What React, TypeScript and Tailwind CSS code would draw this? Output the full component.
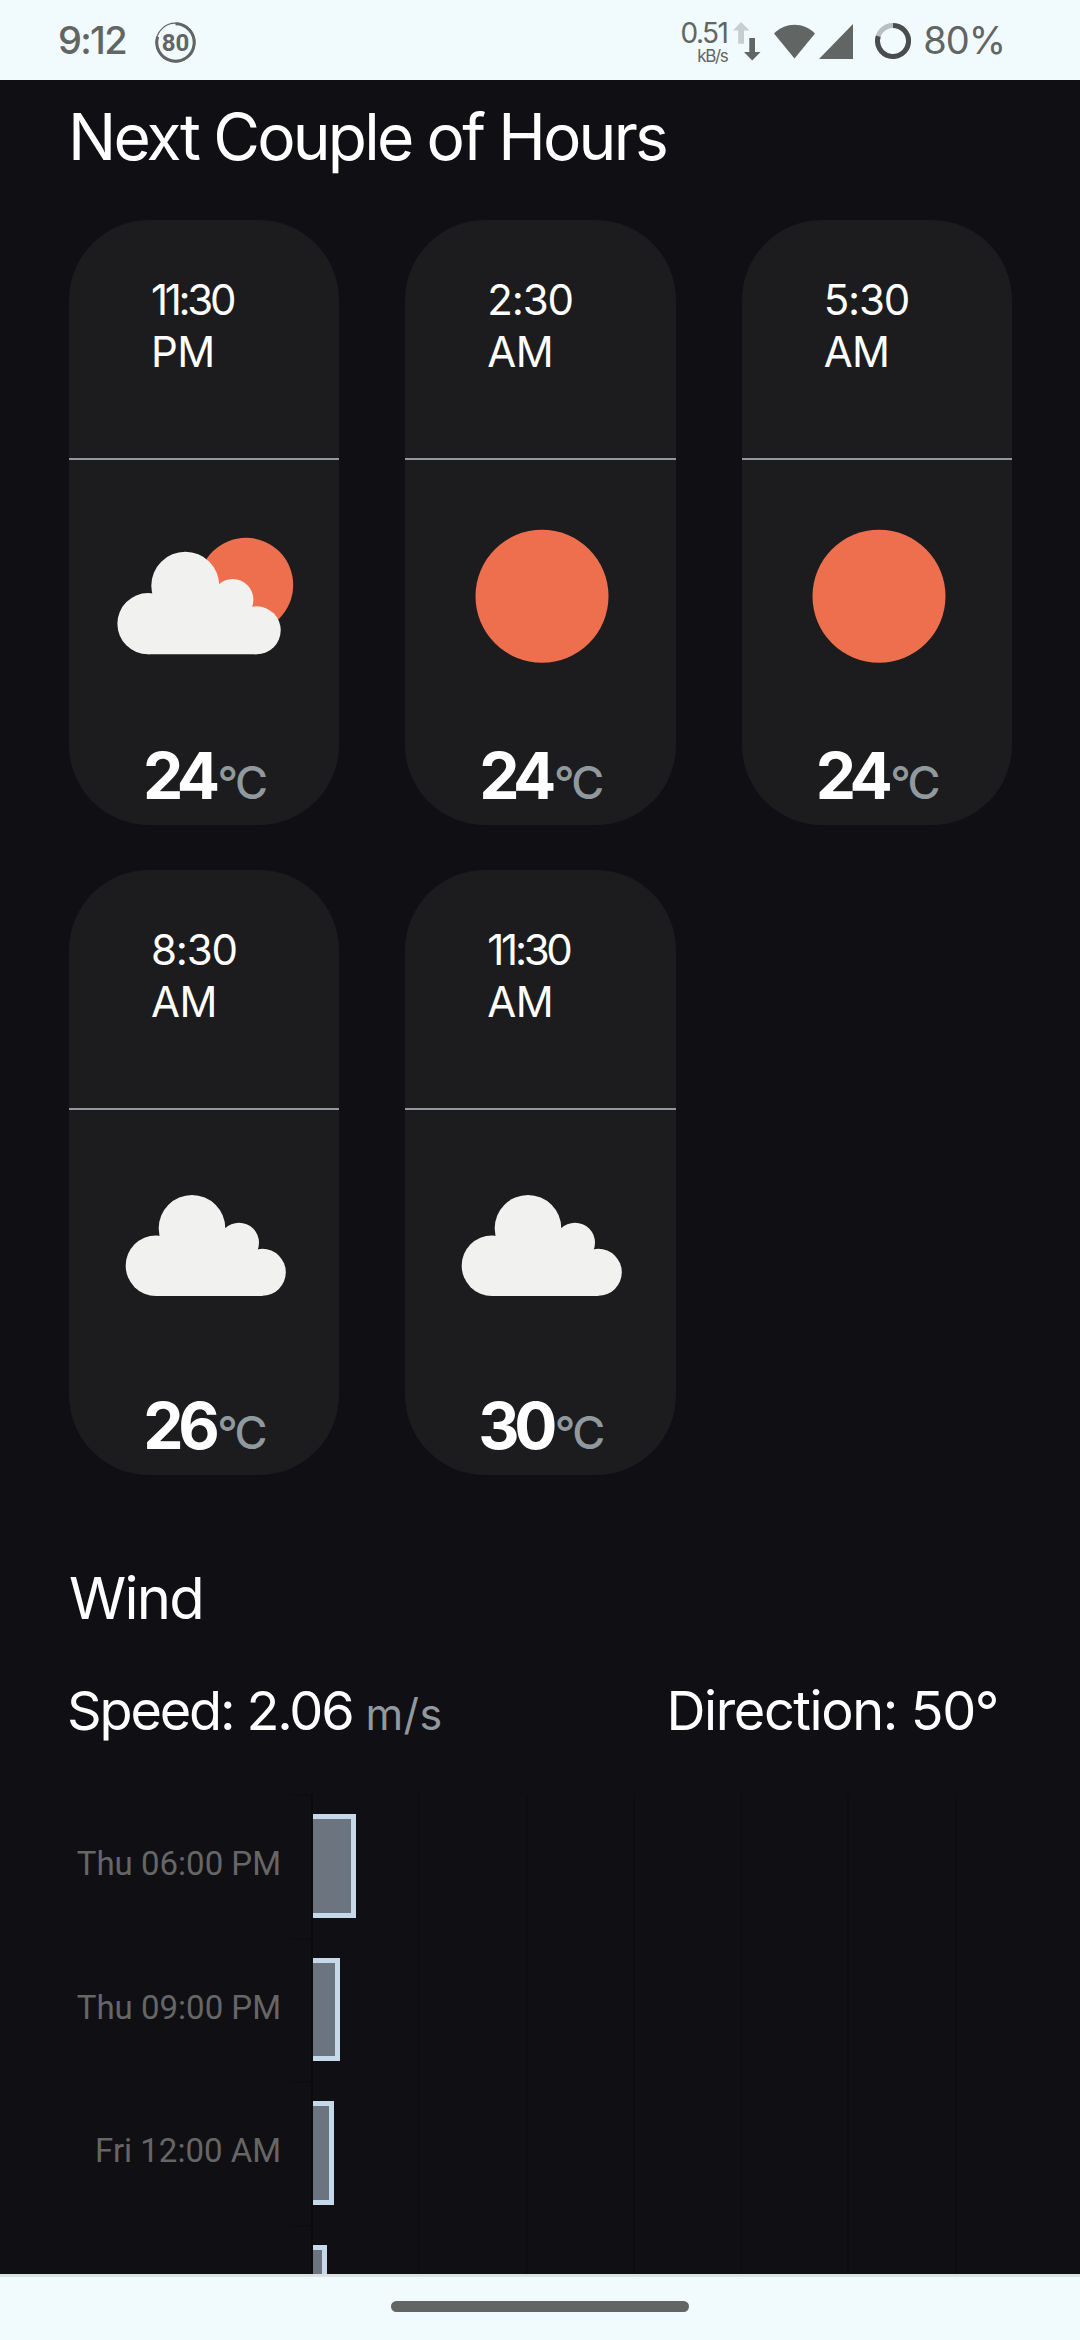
type Sky = "partly" | "sun" | "cloud";

const hours: { time: string; half: string; sky: Sky; temp: number }[] = [
  { time: "11:30", half: "PM", sky: "partly", temp: 24 },
  { time: "2:30", half: "AM", sky: "sun", temp: 24 },
  { time: "5:30", half: "AM", sky: "sun", temp: 24 },
  { time: "8:30", half: "AM", sky: "cloud", temp: 26 },
  { time: "11:30", half: "AM", sky: "cloud", temp: 30 },
];

const winds = [
  { label: "Thu 06:00 PM", width: 43 },
  { label: "Thu 09:00 PM", width: 27 },
  { label: "Fri 12:00 AM", width: 21 },
  { label: "", width: 14 },
];

function SkyIcon({ sky }: { sky: Sky }) {
  return (
    <svg width="270" height="280" viewBox="0 0 270 280" className="block">
      {sky === "sun" && <circle cx="137" cy="136.3" r="66.5" fill="#ed6f4d" />}
      {sky === "partly" && (
        <>
          <circle cx="177" cy="125" r="47.2" fill="#ed6f4d" />
          <g fill="#f1f1ef">
            <circle cx="79" cy="163.7" r="30.6" />
            <circle cx="116.3" cy="125.7" r="34" />
            <circle cx="163.7" cy="139.7" r="20.7" />
            <circle cx="187.7" cy="170.3" r="24" />
            <path d="M79 194.3V150L110 140H163L187.7 160V194.3Z" />
          </g>
        </>
      )}
      {sky === "cloud" && (
        <g fill="#f1f1ef">
          <circle cx="87" cy="155.7" r="30.3" />
          <circle cx="123" cy="118.3" r="33.3" />
          <circle cx="170" cy="132.7" r="20" />
          <circle cx="193.3" cy="162.3" r="23.5" />
          <path d="M87 186V142L117 132H169L193.3 152V186Z" />
        </g>
      )}
    </svg>
  );
}

function StatusBar() {
  return (
    <header className="flex h-20 items-start bg-[#f1fafc] text-[#616564]">
      <span className="ml-[58px] mt-[20px] w-[97px] text-[38px] leading-[41px] font-medium tracking-[-1.7px] whitespace-nowrap">9:12</span>
      <div className="relative mt-[22px] flex h-[41px] w-[41px] items-center justify-center font-['Roboto'] text-[24px] font-bold">
        <svg className="absolute inset-0" width="41" height="41" viewBox="0 0 41 41" fill="none" stroke="#616564">
          <circle cx="20.5" cy="20.5" r="19.3" strokeWidth="1.2" />
          <path d="M20.5 1.8A18.7 18.7 0 1 1 2.7 14.7" strokeWidth="3" />
        </svg>
        <span className="leading-none">80</span>
      </div>
      <div className="ml-auto flex flex-col items-end pt-[19px]">
        <span className="text-[28px] leading-[28px] tracking-[-1.6px]">0.51</span>
        <span className="pt-[1px] text-[17px] leading-[17px] tracking-[-1.4px]">kB/s</span>
      </div>
      <svg className="ml-[6px] mt-[20px]" width="29" height="42" viewBox="0 0 29 42">
        <path d="M8 2L16.5 10.5H11V23.7H5.2V10.5H0Z" fill="#c6cecf" />
        <path d="M16.3 18H22V32H27.5L19.2 40.5L11 32H16.3Z" fill="#616564" />
      </svg>
      <svg className="ml-[12px] mt-[22px]" width="41" height="38" viewBox="0 0 41 38">
        <path d="M20.5 36.5L0 11.5C11 -.2 30 -.2 41 11.5Z" fill="#616564" />
      </svg>
      <svg className="ml-[4px] mt-[22px]" width="34" height="38" viewBox="0 0 34 38">
        <path d="M34 2V37H0Z" fill="#616564" />
      </svg>
      <svg className="ml-[22px] mt-[23px]" width="36" height="36" viewBox="0 0 36 36" fill="none" strokeWidth="5">
        <circle cx="18" cy="18" r="15.5" stroke="#b8c0c1" />
        <path d="M18 2.5A15.5 15.5 0 1 1 3.3 13.2" stroke="#4a4d4d" />
      </svg>
      <span className="mt-[20px] mr-[75px] ml-[12px] text-[38px] leading-[41px] tracking-[-1px]">80%</span>
    </header>
  );
}

export default function App() {
  return (
    <div className="flex h-[2340px] w-[1080px] flex-col overflow-hidden bg-[#101014] font-['Inter',sans-serif] text-white">
      <StatusBar />
      <main className="min-h-0 flex-1 overflow-hidden">
        <h1 className="ml-[68px] h-[113px] text-[64px] leading-[113px] tracking-[-2.8px] whitespace-nowrap">Next Couple of Hours</h1>
        <section className="mx-[69px] mt-[27px] grid w-[943px] grid-cols-3 gap-x-[66px] gap-y-[45px]">
          {hours.map((h, i) => (
            <article key={i} className="h-[605px] rounded-[80px] bg-[#1c1c1e]">
              <div className="h-[240px] border-b-2 border-[#92979f] pt-[54px] pl-[82px] text-[42px] leading-[52px] tracking-[-1.2px]">
                <p className={h.time.length > 4 ? "tracking-[-3.3px]" : ""}>{h.time}</p>
                <p className="tracking-[-0.6px]">{h.half}</p>
              </div>
              <SkyIcon sky={h.sky} />
              <p className="flex items-baseline justify-center text-[64px] leading-[72px] font-bold tracking-[-5.5px]">
                {h.temp}
                <span className="ml-[3px] text-[45px] font-medium tracking-[-2.6px] text-[#8f999e]">°C</span>
              </p>
            </article>
          ))}
        </section>
        <h2 className="mt-[83px] ml-[69px] h-20 text-[58px] leading-[80px] tracking-[-1.7px]">Wind</h2>
        <div className="mt-[33px] mr-[82px] ml-[67px] flex h-20 justify-between text-[54px] leading-[80px]">
          <p className="tracking-[-2.15px]">
            Speed: 2.06 <span className="text-[43px] tracking-[0.4px] text-[#8f999e]">m/s</span>
          </p>
          <p className="tracking-[-1.4px]">Direction: 50°</p>
        </div>
        <section className="mt-[43px] flex">
          <div className="w-[290px]">
            {winds.map((w, i) => (
              <div key={i} className="h-[143.7px] pr-[9px] text-right font-['Roboto'] text-[33px] leading-[140px] text-[#666666]">{w.label}</div>
            ))}
          </div>
          <div className="w-[21px]">
            {winds.map((w, i) => (
              <div key={i} className="h-[143.7px] border-t-2 border-[#0e0e11]" />
            ))}
          </div>
          <div className="relative w-[752px] border-l-2 border-[#0b0b0d]">
            <div className="absolute inset-0 flex">
              {[0, 1, 2, 3, 4, 5].map((g) => (
                <div key={g} className="w-[107.3px] border-r-2 border-[#0d0d10]" />
              ))}
            </div>
            {winds.map((w, i) => (
              <div key={i} className="relative h-[143.7px] pt-[20px]">
                <div className="h-[103.5px] border-y-5 border-r-5 border-[#c5d9ea] bg-[#6b747f]" style={{ width: w.width }} />
              </div>
            ))}
          </div>
        </section>
      </main>
      <footer className="flex h-[66px] shrink-0 justify-center border-t-3 border-[#dbe3e2] bg-[#f1fafc] pt-[24px]">
        <div className="h-[11px] w-[298px] rounded-full bg-[#616564]" />
      </footer>
    </div>
  );
}
